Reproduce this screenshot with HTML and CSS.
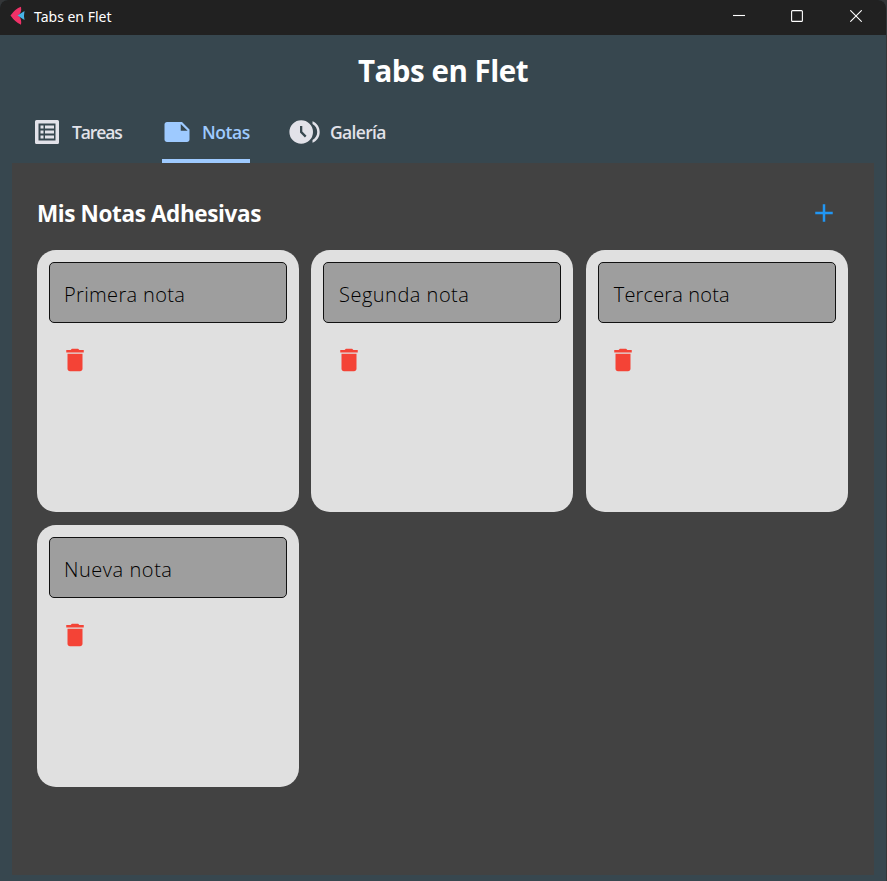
FILE: index.html
```html
<!DOCTYPE html>
<html lang="es">
<head>
<meta charset="utf-8">
<title>Tabs en Flet</title>
<link rel="stylesheet" href="styles.css">
</head>
<body>
<svg class="defs" aria-hidden="true">
  <symbol id="trash" viewBox="0 0 24 24"><path d="M6 19c0 1.1.9 2 2 2h8c1.1 0 2-.9 2-2V7H6v12zM19 4h-3.500l-1-1h-5l-1 1H5v2h14V4z"/></symbol>
</svg>
<div class="window">
  <header class="titlebar">
    <svg class="logo" viewBox="0 0 16 20"><path d="M.5 9.500Q5 3 11 .8Q12 7 8 9.500Q12 12 11 18.800Q5 16 .5 9.500z" fill="#ee3167"/><path d="M7.500 9.500L14.500 5Q13.500 9.500 14.500 14z" fill="#48b4e8"/></svg>
    <span class="caption">Tabs en Flet</span>
    <div class="controls">
      <svg viewBox="0 0 12 12"><path d="M0 5.500h12"/></svg>
      <svg viewBox="0 0 12 12"><rect x=".6" y=".6" width="10.800" height="10.800" rx="1"/></svg>
      <svg viewBox="0 0 12 12"><path d="M.3.3l11.400 11.400M11.700.3L.3 11.700"/></svg>
    </div>
  </header>
  <h1>Tabs en Flet</h1>
  <nav class="tabs">
    <a class="tab tareas"><svg viewBox="0 0 30 30"><path fill-rule="evenodd" d="M4.500 3h21q1.500 0 1.500 1.500v21q0 1.500-1.500 1.500h-21q-1.500 0-1.500-1.500v-21Q3 3 4.500 3zM6.500 6.500v17h17v-17zM8.500 8.500h3v3h-3zM13 8.500h9v3h-9zM8.500 13.500h3v3h-3zM13 13.500h9v3h-9zM8.500 18.500h3v3h-3zM13 18.500h9v3h-9z"/></svg><span>Tareas</span></a>
    <a class="tab notas active"><svg viewBox="0 0 24 24"><path d="M22 10l-6-6H4c-1.100 0-2 .9-2 2v12c0 1.100.9 2 2 2h16c1.100 0 2-.9 2-2v-8zM15 5.500l5.500 5.500H15V5.500z"/></svg><span>Notas</span></a>
    <a class="tab galeria"><svg viewBox="0 0 32 30"><path fill-rule="evenodd" d="M13.200 3.200a11.800 11.800 0 1 0 0 23.600a11.800 11.800 0 0 0 0-23.600zM12 9h2.300v5.500l4.200 4.300-1.600 1.600-4.900-4.900z"/><path d="M24.500 4.200v2.900c3 1.700 4.700 4.500 4.700 7.900s-1.700 6.200-4.700 7.900v2.900c4.600-1.800 7.200-6 7.200-10.800S29.100 6 24.500 4.200z"/></svg><span>Galería</span></a>
  </nav>
  <main class="panel">
    <div class="heading">
      <h2>Mis Notas Adhesivas</h2>
      <svg class="add" viewBox="0 0 24 24"><path d="M19 13h-6v6h-2v-6H5v-2h6V5h2v6h6v2z"/></svg>
    </div>
    <section class="notes">
      <article class="note"><div class="field"><span class="n1">Primera nota</span></div><svg><use href="#trash"/></svg></article>
      <article class="note"><div class="field"><span class="n2">Segunda nota</span></div><svg><use href="#trash"/></svg></article>
      <article class="note"><div class="field"><span class="n3">Tercera nota</span></div><svg><use href="#trash"/></svg></article>
      <article class="note"><div class="field"><span class="n4">Nueva nota</span></div><svg><use href="#trash"/></svg></article>
    </section>
  </main>
</div>
</body>
</html>
```
FILE: styles.css
```css
* { box-sizing: border-box; }
body { margin: 0; background: #343638; font-family: "Open Sans", "Noto Sans", sans-serif; overflow: hidden; }
svg { display: block; flex: none; }
.defs { display: none; }
.window { width: 886px; height: 881px; background: #37474f; border-radius: 8px 8px 0 0; overflow: hidden; display: flex; flex-direction: column; }
.titlebar { height: 35px; flex: none; background: #212121; display: flex; align-items: center; padding: 0 24px 0 10px; }
.logo { width: 16px; height: 20px; margin-top: -3px; }
.caption { margin-left: 8px; color: #fff; font: 14px/20px "Noto Sans", sans-serif; margin-top: -2px; white-space: nowrap; }
.controls { margin-left: auto; display: flex; gap: 47px; margin-top: -3px; }
.controls svg { width: 12px; height: 12px; fill: none; stroke: #fff; stroke-width: 1.100; }
.controls svg:first-child { margin-right: -1px; }
h1 { margin: 15px 0 0; height: 41px; flex: none; line-height: 41px; font-size: 29.500px; font-weight: 700; text-align: center; color: #fff; letter-spacing: -0.470px; }
.tabs { height: 72px; flex: none; display: flex; padding-left: 32px; gap: 40px; }
.tab { display: flex; align-items: center; height: 72px; padding-top: 10px; gap: 10px; color: #e2e2e9; font-weight: 600; font-size: 17.500px; line-height: 26px; white-space: nowrap; }
.tab svg { width: 30px; height: 30px; fill: currentColor; }
.tab.galeria svg { width: 32px; }
.tab.galeria { margin-left: -2px; letter-spacing: -0.650px; }
.tareas { width: 90px; letter-spacing: -1.100px; }
.notas { width: 88px; letter-spacing: -0.450px; }
.tab.active { color: #9ecaff; background: linear-gradient(#9ecaff, #9ecaff) 0 100% / 100% 4px no-repeat; }
.panel { margin: 0 12px 6px; flex: 1; background: #424242; padding: 25px; }
.heading { display: flex; align-items: center; justify-content: space-between; height: 50px; padding-right: 10px; }
h2 { margin: 2px 0 0; font-size: 22.500px; line-height: 32px; font-weight: 700; color: #fff; letter-spacing: -0.380px; }
.add { width: 30px; height: 30px; fill: #2196f3; }
.notes { display: grid; grid-template-columns: repeat(3, 262px); gap: 12.800px 12.400px; margin-top: 12px; }
.note { height: 262.200px; background: #e0e0e0; border-radius: 19px; padding: 12px; }
.field { height: 61px; border: 1.500px solid #111; border-radius: 5px; background: #9e9e9e; padding: 4px 14px 0; display: flex; align-items: center; color: #000; font-size: 20px; font-weight: 300; white-space: nowrap; }
.n1 { letter-spacing: .350px; }
.n2 { letter-spacing: .500px; margin-left: .600px; }
.n3 { letter-spacing: .150px; margin-left: 1px; }
.n4 { letter-spacing: .550px; }
.note svg { width: 30px; height: 30px; margin: 22px 0 0 10.700px; fill: #f44336; }
```
